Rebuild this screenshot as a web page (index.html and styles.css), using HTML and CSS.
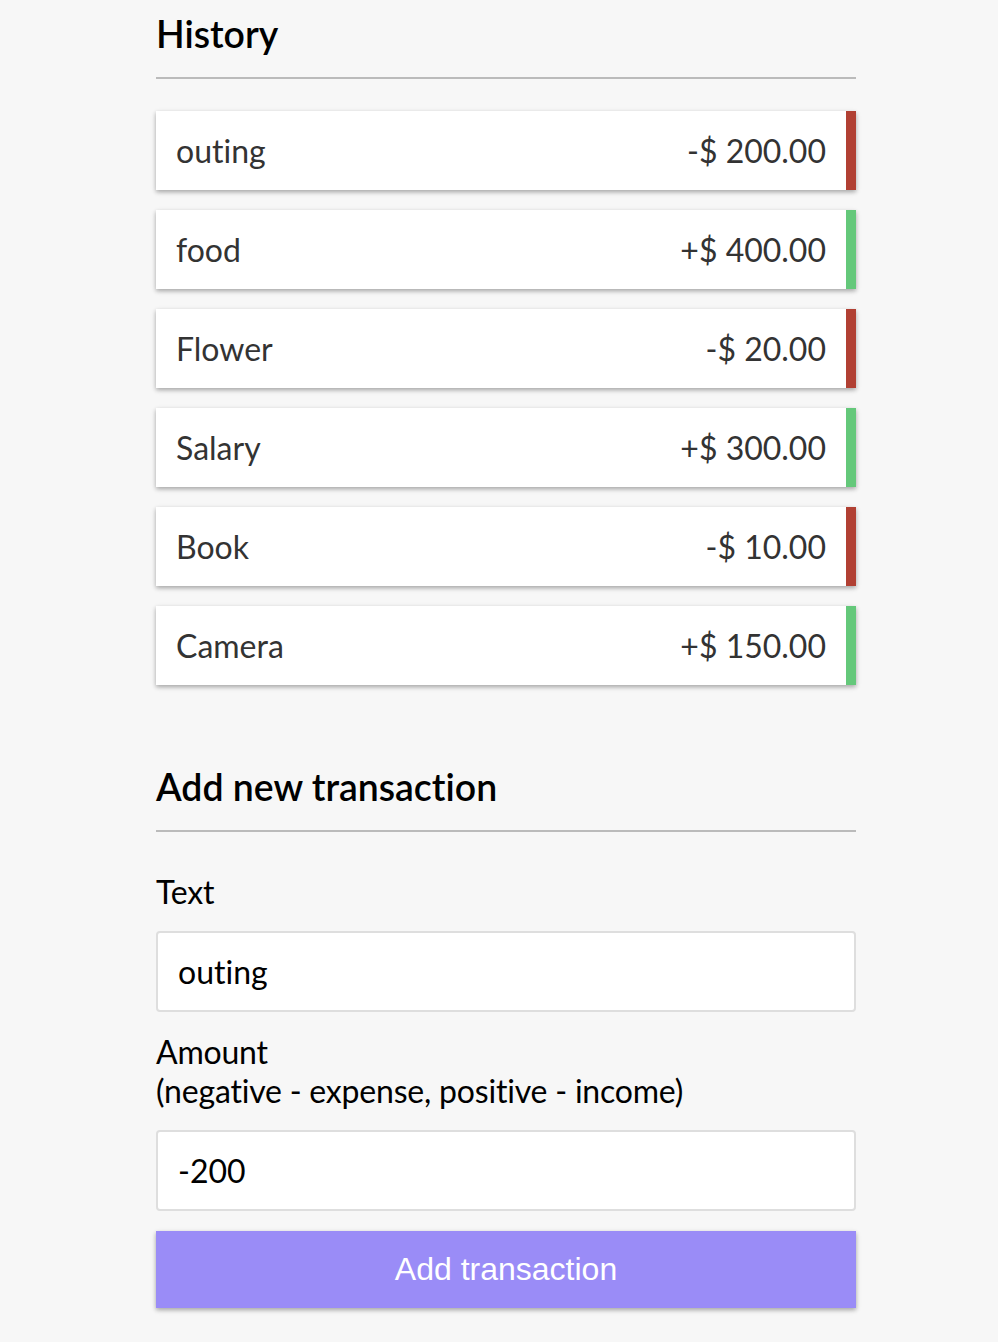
FILE: index.html
```html
<!DOCTYPE html>
<html lang="en">
<head>
<meta charset="utf-8">
<title>Expense Tracker</title>
<link rel="stylesheet" href="styles.css">
</head>
<body>
<div class="container">
  <h3 class="heading heading-first">History</h3>
  <ul class="list">
    <li class="item minus"><span>outing</span><span>-$ 200.00</span></li>
    <li class="item plus"><span>food</span><span>+$ 400.00</span></li>
    <li class="item minus"><span>Flower</span><span>-$ 20.00</span></li>
    <li class="item plus"><span>Salary</span><span>+$ 300.00</span></li>
    <li class="item minus"><span>Book</span><span>-$ 10.00</span></li>
    <li class="item plus"><span>Camera</span><span>+$ 150.00</span></li>
  </ul>
  <h3 class="heading">Add new transaction</h3>
  <form class="form">
    <div class="form-control">
      <label class="label" for="text">Text</label>
      <input class="field" type="text" id="text" value="outing">
    </div>
    <div class="form-control">
      <label class="label" for="amount">Amount <br>(negative - expense, positive - income)</label>
      <input class="field" type="text" id="amount" value="-200">
    </div>
    <button class="btn" type="button">Add transaction</button>
  </form>
</div>
</body>
</html>
```
FILE: styles.css
```css
* { box-sizing: border-box; }
html, body { margin: 0; padding: 0; }
body {
  background-color: #f7f7f7;
  font-family: "Lato", "Noto Sans", sans-serif;
  font-variant-ligatures: no-common-ligatures;
  padding-left: 14px;
}
.container {
  width: 700px;
  margin: 0 auto;
  padding-top: 12px;
  padding-bottom: 20px;
}
.heading {
  font-size: 37.44px;
  font-weight: 600;
  line-height: 1.2;
  color: #000;
  border-bottom: 2px solid #bbb;
  padding-bottom: 20px;
  margin: 80px 0 20px;
}
.heading-first { margin-top: 0; }
.list {
  list-style: none;
  padding: 0;
  margin: 32px 0 80px;
}
.item {
  background-color: #fff;
  box-shadow: 0 2px 6px rgba(0,0,0,0.12), 0 2px 4px rgba(0,0,0,0.24);
  color: #333;
  display: flex;
  justify-content: space-between;
  font-size: 32px;
  line-height: 39px;
  padding: 20px;
  margin: 20px 0;
}
.item.plus { border-right: 10px solid #64c87a; }
.item.minus { border-right: 10px solid #b14033; }
.form-control { display: block; }
.label {
  display: inline-block;
  margin: 20px 0;
  font-size: 32px;
  line-height: 39px;
  letter-spacing: -0.2px;
  color: #000;
}
.field {
  display: block;
  width: 100%;
  height: 81px;
  border: 2px solid #dedede;
  border-radius: 4px;
  padding: 20px;
  font-family: "Lato", "Noto Sans", sans-serif;
  font-variant-ligatures: no-common-ligatures;
  font-size: 32px;
  line-height: 36px;
  color: #000;
  background: #fff;
}
.btn {
  display: block;
  width: 100%;
  background-color: #9a8cf7;
  color: #fff;
  border: 0;
  font-family: "Liberation Sans", Arial, sans-serif;
  font-size: 32px;
  line-height: 1.15;
  padding: 20px;
  margin: 20px 0 60px;
  box-shadow: 0 2px 6px rgba(0,0,0,0.12), 0 2px 4px rgba(0,0,0,0.24);
}
```
